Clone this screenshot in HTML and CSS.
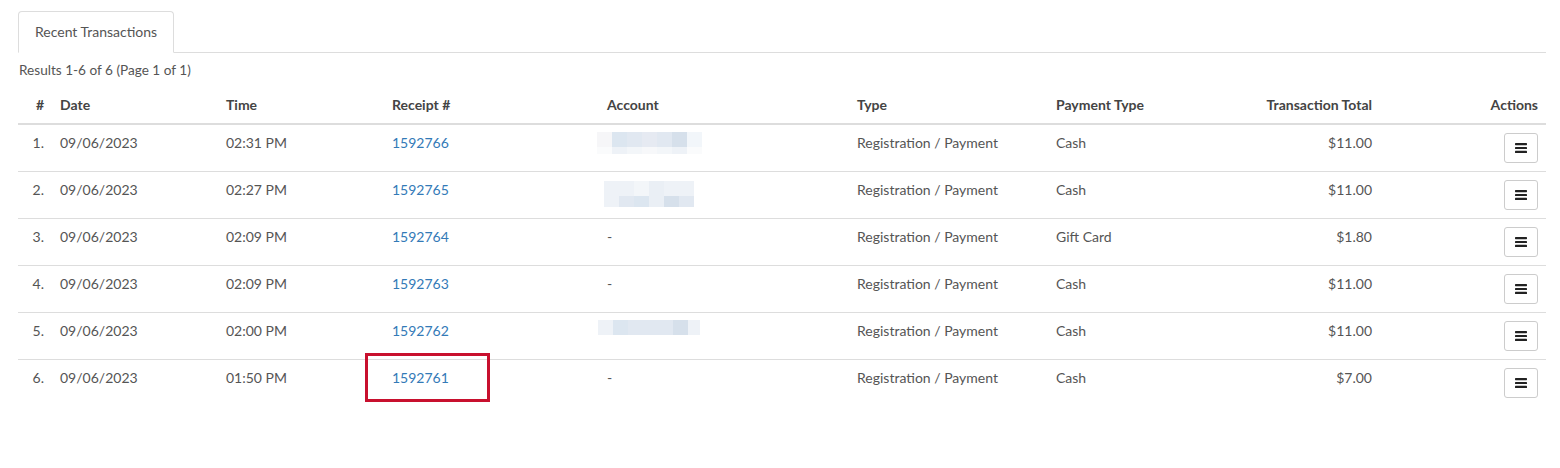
FILE: index.html
```html
<!DOCTYPE html>
<html lang="en">
<head>
  <meta charset="UTF-8">
  <title>Recent Transactions</title>
  <link rel="stylesheet" href="styles.css">
</head>
<body>

<div class="page">
  <!-- Tabs -->
  <ul class="tabs">
    <li class="tab active">Recent Transactions</li>
  </ul>

  <p class="results">Results 1-6 of 6 (Page 1 of 1)</p>

  <table class="tx">
    <colgroup>
      <col class="c-num"><col class="c-date"><col class="c-time"><col class="c-rcpt"><col class="c-acct">
      <col class="c-type"><col class="c-pay"><col class="c-total"><col class="c-act">
    </colgroup>
    <thead>
      <tr>
        <th class="r">#</th><th>Date</th><th>Time</th><th>Receipt #</th><th>Account</th>
        <th>Type</th><th>Payment Type</th><th class="r">Transaction Total</th><th class="r">Actions</th>
      </tr>
    </thead>
    <tbody>
      <tr>
        <td class="r">1.</td><td>09/06/2023</td><td>02:31 PM</td><td><a href="#">1592766</a></td>
        <td>
          <div class="blur b1">
            <div class="blur-row tall"><i class="s1"></i><i class="s2"></i><i class="s3"></i><i class="s4"></i><i class="s3"></i><i class="s5"></i><i class="s6"></i></div>
            <div class="blur-row short"><i class="l1"></i><i class="l2"></i><i class="l3"></i><i class="l4"></i><i class="l3"></i><i class="l2"></i><i class="l1"></i></div>
          </div>
        </td>
        <td>Registration / Payment</td><td>Cash</td><td class="r">$11.00</td>
        <td class="r"><button class="menu-btn"><svg width="12" height="10" viewBox="0 0 12 10"><rect y="0" width="12" height="2.2" rx=".6"/><rect y="3.9" width="12" height="2.2" rx=".6"/><rect y="7.8" width="12" height="2.2" rx=".6"/></svg></button></td>
      </tr>
      <tr>
        <td class="r">2.</td><td>09/06/2023</td><td>02:27 PM</td><td><a href="#">1592765</a></td>
        <td>
          <div class="blur b2">
            <div class="blur-row tall"><i class="l2"></i><i class="l2"></i><i class="l3"></i><i class="m1"></i><i class="l2"></i><i class="l2"></i></div>
            <div class="blur-row mid"><i class="l2"></i><i class="s3"></i><i class="s2"></i><i class="m1"></i><i class="s5"></i><i class="s3"></i></div>
          </div>
        </td>
        <td>Registration / Payment</td><td>Cash</td><td class="r">$11.00</td>
        <td class="r"><button class="menu-btn"><svg width="12" height="10" viewBox="0 0 12 10"><rect y="0" width="12" height="2.2" rx=".6"/><rect y="3.9" width="12" height="2.2" rx=".6"/><rect y="7.8" width="12" height="2.2" rx=".6"/></svg></button></td>
      </tr>
      <tr>
        <td class="r">3.</td><td>09/06/2023</td><td>02:09 PM</td><td><a href="#">1592764</a></td><td>-</td>
        <td>Registration / Payment</td><td>Gift Card</td><td class="r">$1.80</td>
        <td class="r"><button class="menu-btn"><svg width="12" height="10" viewBox="0 0 12 10"><rect y="0" width="12" height="2.2" rx=".6"/><rect y="3.9" width="12" height="2.2" rx=".6"/><rect y="7.8" width="12" height="2.2" rx=".6"/></svg></button></td>
      </tr>
      <tr>
        <td class="r">4.</td><td>09/06/2023</td><td>02:09 PM</td><td><a href="#">1592763</a></td><td>-</td>
        <td>Registration / Payment</td><td>Cash</td><td class="r">$11.00</td>
        <td class="r"><button class="menu-btn"><svg width="12" height="10" viewBox="0 0 12 10"><rect y="0" width="12" height="2.2" rx=".6"/><rect y="3.9" width="12" height="2.2" rx=".6"/><rect y="7.8" width="12" height="2.2" rx=".6"/></svg></button></td>
      </tr>
      <tr>
        <td class="r">5.</td><td>09/06/2023</td><td>02:00 PM</td><td><a href="#">1592762</a></td>
        <td>
          <div class="blur b5">
            <div class="blur-row tall"><i class="l2"></i><i class="s2"></i><i class="s3"></i><i class="s3 w2"></i><i class="s5"></i><i class="l2 w-end"></i></div>
          </div>
        </td>
        <td>Registration / Payment</td><td>Cash</td><td class="r">$11.00</td>
        <td class="r"><button class="menu-btn"><svg width="12" height="10" viewBox="0 0 12 10"><rect y="0" width="12" height="2.2" rx=".6"/><rect y="3.9" width="12" height="2.2" rx=".6"/><rect y="7.8" width="12" height="2.2" rx=".6"/></svg></button></td>
      </tr>
      <tr>
        <td class="r">6.</td><td>09/06/2023</td><td>01:50 PM</td>
        <td class="hl-cell"><a href="#">1592761</a><span class="highlight"></span></td><td>-</td>
        <td>Registration / Payment</td><td>Cash</td><td class="r">$7.00</td>
        <td class="r"><button class="menu-btn"><svg width="12" height="10" viewBox="0 0 12 10"><rect y="0" width="12" height="2.2" rx=".6"/><rect y="3.9" width="12" height="2.2" rx=".6"/><rect y="7.8" width="12" height="2.2" rx=".6"/></svg></button></td>
      </tr>
    </tbody>
  </table>
</div>

</body>
</html>
```

FILE: styles.css
```css
*{box-sizing:border-box}
body{margin:0;background:#fff;font-family:Lato,'Open Sans',sans-serif;font-size:14px;line-height:20px;color:#555}
.page{padding:11px 14px 0 18px}

/* tabs */
.tabs{list-style:none;margin:0;padding:0;display:flex;border-bottom:1px solid #ddd}
.tab{padding:10px 16px;margin-bottom:-1px;border:1px solid transparent;border-radius:4px 4px 0 0;color:#555}
.tab.active{background:#fff;border-color:#ddd #ddd transparent}

.results{margin:7px 0 7px 1px;font-size:13.6px;color:#555}

/* table */
.tx{width:100%;border-collapse:collapse;table-layout:fixed}
.c-num{width:34px}.c-date{width:166px}.c-time{width:166px}.c-rcpt{width:215px}.c-acct{width:250px}
.c-type{width:199px}.c-pay{width:152px}.c-total{width:180px}.c-act{width:166px}
.tx th,.tx td{padding:8px;text-align:left;vertical-align:top}
.tx th{font-weight:700;color:#444;border-bottom:2px solid #ddd}
.tx td{border-top:1px solid #ddd}
.tx tbody tr:first-child td{border-top:0}
.tx .r{text-align:right}
.tx a{color:#337ab7;text-decoration:none}

/* action button */
.menu-btn{display:inline-flex;align-items:center;justify-content:center;width:34px;height:30px;padding:0;background:#fff;border:1px solid #ccc;border-radius:3px;cursor:pointer}
.menu-btn svg{fill:#222}

/* red highlight around receipt */
.hl-cell{position:relative}
.highlight{position:absolute;left:-19px;top:-7px;width:125px;height:49px;border:3px solid #c8102e;pointer-events:none}

/* pixelated account placeholders */
.blur{display:flex;flex-direction:column}
.blur-row{display:flex}
.blur-row i{display:block;width:15px}
.blur-row.tall i{height:15px}
.blur-row.mid i{height:11px}
.blur-row.short i{height:7px}
.blur-row i.w2{width:30px}
.blur-row i.w-end{width:12px}
.b1{margin:-1px 0 0 -10px}
.b2{margin:1px 0 0 -3px}
.b5{margin:-1px 0 0 -9px}
.s1{background:#f6f6f8}.s2{background:#dce6f0}.s3{background:#e1e8f1}.s4{background:#e6eaf2}.s5{background:#d6e0eb}.s6{background:#f2f6fa}
.l1{background:#fafbfc}.l2{background:#eef2f7}.l3{background:#f3f6f9}.l4{background:#f7f8fa}
.m1{background:#eaeff5}
```
